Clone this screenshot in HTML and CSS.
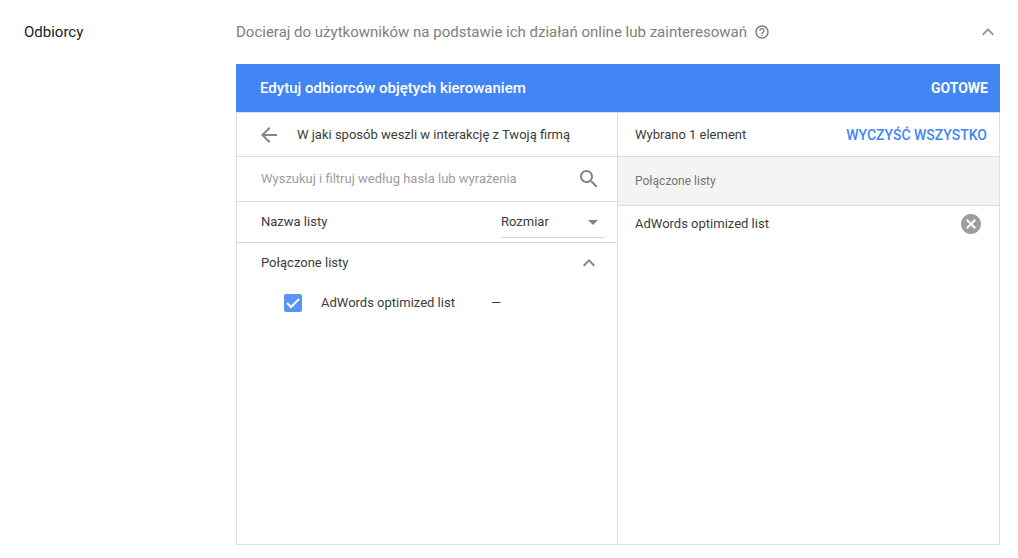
FILE: index.html
```html
<!DOCTYPE html>
<html lang="pl">
<head>
    <meta charset="UTF-8">
    <meta name="viewport" content="width=device-width, initial-scale=1.0">
    <title>Odbiorcy</title>
    <link rel="stylesheet" href="styles.css">
</head>
<body>
    <section class="section">
        <h2 class="section-title">Odbiorcy</h2>
        <div class="section-body">
            <div class="intro">
                <p>Docieraj do użytkowników na podstawie ich działań online lub zainteresowań</p>
                <button class="icon-button help" type="button" aria-label="Pomoc">
                    <svg width="16" height="16" viewBox="0 0 24 24"><path d="M11 18h2v-2h-2v2zm1-16C6.480 2 2 6.480 2 12s4.480 10 10 10 10-4.480 10-10S17.520 2 12 2zm0 18c-4.410 0-8-3.590-8-8s3.590-8 8-8 8 3.590 8 8-3.590 8-8 8zm0-14c-2.210 0-4 1.790-4 4h2c0-1.100.9-2 2-2s2 .9 2 2c0 2-3 1.750-3 5h2c0-2.250 3-2.500 3-5 0-2.210-1.790-4-4-4z"/></svg>
                </button>
                <button class="icon-button collapse" type="button" aria-label="Zwiń">
                    <svg width="24" height="24" viewBox="0 0 24 24"><path d="M12 8l-6 6 1.410 1.410L12 10.830l4.590 4.580L18 14z"/></svg>
                </button>
            </div>

            <div class="panel">
                <header class="panel-header">
                    <h3>Edytuj odbiorców objętych kierowaniem</h3>
                    <button class="done" type="button">GOTOWE</button>
                </header>
                <div class="columns">
                    <div class="picker">
                        <div class="row row-top">
                            <button class="icon-button" type="button" aria-label="Wstecz">
                                <svg width="24" height="24" viewBox="0 0 24 24"><path d="M20 11H7.830l5.590-5.590L12 4l-8 8 8 8 1.410-1.410L7.830 13H20v-2z"/></svg>
                            </button>
                            <span class="row-label">W jaki sposób weszli w interakcję z Twoją firmą</span>
                        </div>
                        <div class="row search">
                            <input type="text" placeholder="Wyszukuj i filtruj według hasła lub wyrażenia" aria-label="Wyszukuj i filtruj według hasła lub wyrażenia">
                            <button class="icon-button" type="button" aria-label="Szukaj">
                                <svg width="24" height="24" viewBox="0 0 24 24"><path d="M15.500 14h-.79l-.28-.27C15.410 12.590 16 11.110 16 9.500 16 5.910 13.090 3 9.500 3S3 5.910 3 9.500 5.910 16 9.500 16c1.610 0 3.090-.59 4.230-1.570l.27.28v.79l5 4.990L20.490 19l-4.990-5zm-6 0C7.010 14 5 11.990 5 9.500S7.010 5 9.500 5 14 7.010 14 9.500 11.990 14 9.500 14z"/></svg>
                            </button>
                        </div>
                        <div class="row list-head">
                            <label for="metric">Nazwa listy</label>
                            <div class="select-box">
                                <select id="metric">
                                    <option>Rozmiar</option>
                                </select>
                                <svg class="arrow" width="24" height="24" viewBox="0 0 24 24"><path d="M7 10l5 5 5-5z"/></svg>
                            </div>
                        </div>
                        <div class="group">
                            <span>Połączone listy</span>
                            <button class="icon-button" type="button" aria-label="Zwiń listy">
                                <svg width="24" height="24" viewBox="0 0 24 24"><path d="M12 8l-6 6 1.410 1.410L12 10.830l4.590 4.580L18 14z"/></svg>
                            </button>
                        </div>
                        <div class="item">
                            <input id="optimized" type="checkbox" checked>
                            <svg class="tick" width="18" height="18" viewBox="0 0 18 18"><path d="M3 9l4 4 8-8"/></svg>
                            <label for="optimized">AdWords optimized list</label>
                            <span class="size">—</span>
                        </div>
                    </div>

                    <div class="selected">
                        <div class="row row-top">
                            <span>Wybrano 1 element</span>
                            <button class="clear" type="button">WYCZYŚĆ WSZYSTKO</button>
                        </div>
                        <div class="subhead">Połączone listy</div>
                        <div class="chosen">
                            <span>AdWords optimized list</span>
                            <button class="icon-button remove" type="button" aria-label="Usuń">
                                <svg width="24" height="24" viewBox="0 0 24 24"><path d="M12 2C6.470 2 2 6.470 2 12s4.470 10 10 10 10-4.470 10-10S17.530 2 12 2zm5 13.590L15.590 17 12 13.410 8.410 17 7 15.590 10.590 12 7 8.410 8.410 7 12 10.590 15.590 7 17 8.410 13.410 12 17 15.590z"/></svg>
                            </button>
                        </div>
                    </div>
                </div>
            </div>
        </div>
    </section>
</body>
</html>
```
FILE: styles.css
```css
* {
    box-sizing: border-box;
}
body {
    margin: 0;
    background: #fff;
    color: #3c3c3c;
    font-family: Roboto, sans-serif;
    font-size: 13px;
    line-height: 20px;
}
h2, h3, p {
    margin: 0;
}
button, input, select {
    font-family: inherit;
    font-size: inherit;
    color: inherit;
}
button {
    padding: 0;
    border: none;
    background: none;
    cursor: pointer;
}
svg {
    display: block;
    fill: currentColor;
}
.icon-button {
    flex: none;
    color: #858585;
}
.section {
    display: flex;
    padding: 0 18px 13px 24px;
}
.section-title {
    flex: none;
    width: 212px;
    font-size: 15px;
    font-weight: 400;
    line-height: 64px;
    color: #212121;
}
.section-body {
    flex: 1;
    min-width: 0;
}
.intro {
    display: flex;
    align-items: center;
    height: 64px;
    font-size: 15px;
    color: #808080;
}
.help {
    margin-left: 7px;
    color: #757575;
}
.collapse {
    margin-left: auto;
    color: #999;
}
.panel-header {
    display: flex;
    align-items: center;
    justify-content: space-between;
    height: 48px;
    padding: 0 12px 0 24px;
    background: #4285f4;
    color: #fff;
}
.panel-header h3 {
    font-size: 15px;
    font-weight: 500;
}
.done, .clear {
    font-size: 14px;
    font-weight: 500;
}
.done {
    font-weight: 700;
}
.columns {
    display: grid;
    grid-template-columns: 1fr 1fr;
    min-height: 433px;
    border: 1px solid #ddd;
}
.picker {
    border-right: 1px solid #ddd;
}
.row {
    display: flex;
    align-items: center;
    border-bottom: 1px solid #ddd;
}
.row-top {
    height: 44px;
}
.picker .row-top {
    padding-left: 20px;
}
.row-label {
    margin-left: 16px;
}
.search {
    height: 45px;
    padding: 0 16px 0 24px;
}
.search input {
    flex: 1;
    min-width: 0;
    height: 24px;
    padding: 0 0 2px;
    border: none;
    outline: none;
}
.search input::placeholder {
    color: #9e9e9e;
}
.list-head {
    justify-content: space-between;
    height: 41px;
    padding: 0 12px 0 24px;
}
.select-box {
    position: relative;
    width: 104px;
}
.select-box select {
    display: block;
    width: 100%;
    height: 32px;
    padding: 0;
    border: none;
    border-bottom: 1px solid #ddd;
    background: none;
    appearance: none;
}
.arrow {
    position: absolute;
    top: 4px;
    right: 0;
    color: #858585;
    pointer-events: none;
}
.group {
    display: flex;
    align-items: center;
    justify-content: space-between;
    height: 40px;
    padding: 0 16px 0 24px;
}
.item {
    display: grid;
    grid-template-columns: 18px 134px auto;
    column-gap: 19px;
    align-items: center;
    height: 40px;
    padding-left: 47px;
}
.item label {
    white-space: nowrap;
}
.item input {
    grid-area: 1 / 1;
    width: 18px;
    height: 18px;
    margin: 0;
    border-radius: 2px;
    background: #5a95f5;
    appearance: none;
}
.tick {
    grid-area: 1 / 1;
    fill: none;
    stroke: #fff;
    stroke-width: 2;
    pointer-events: none;
}
.size {
    padding-left: 17px;
}
.selected .row-top {
    justify-content: space-between;
    padding: 0 12px 0 17px;
}
.clear {
    color: #4285f4;
}
.subhead {
    height: 49px;
    padding-left: 17px;
    border-bottom: 1px solid #ddd;
    background: #f4f4f4;
    color: #757575;
    font-size: 12px;
    line-height: 48px;
}
.chosen {
    display: flex;
    align-items: center;
    justify-content: space-between;
    height: 36px;
    padding: 0 16px 0 17px;
}
.remove {
    color: #9e9e9e;
}
```
